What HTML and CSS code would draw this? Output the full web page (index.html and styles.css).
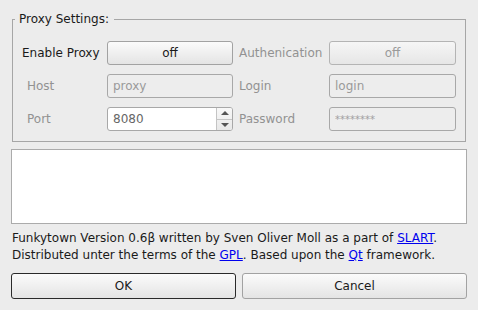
FILE: index.html
```html
<!DOCTYPE html>
<html lang="en">
<head>
    <meta charset="UTF-8">
    <title>Funkytown Settings</title>
    <link rel="stylesheet" href="styles.css">
</head>
<body>
    <div class="dialog">
        <fieldset class="group">
            <legend>Proxy Settings:</legend>
            <div class="form">
                <span class="lbl">Enable Proxy</span>
                <button class="btn">off</button>
                <span class="lbl lbl-right off">Authenication</span>
                <button class="btn" disabled>off</button>

                <span class="lbl lbl-sub off">Host</span>
                <input class="field" type="text" value="proxy" disabled>
                <span class="lbl lbl-right off">Login</span>
                <input class="field" type="text" value="login" disabled>

                <span class="lbl lbl-sub off">Port</span>
                <div class="spin">
                    <input class="spin-input" type="text" value="8080">
                    <div class="spin-arrows">
                        <span class="arrow arrow-up"></span>
                        <span class="arrow arrow-down"></span>
                    </div>
                </div>
                <span class="lbl lbl-right off">Password</span>
                <input class="field field-pass" type="text" value="********" disabled>
            </div>
        </fieldset>

        <div class="log"></div>

        <p class="about">
            Funkytown Version 0.6β written by Sven Oliver Moll as a part of <a href="#">SLART</a>.<br>
            Distributed unter the terms of the <a href="#">GPL</a>. Based upon the <a href="#">Qt</a> framework.
        </p>

        <div class="actions">
            <button class="btn btn-default">OK</button>
            <button class="btn">Cancel</button>
        </div>
    </div>
</body>
</html>
```

FILE: styles.css
```css
body {
    margin: 0;
    background: #ececec;
    font-family: 'DejaVu Sans', sans-serif;
    font-size: 12px;
    color: #1a1a1a;
}
.dialog {
    padding: 12px 11px 0 11px;
}
.group {
    margin: 0 1px 0 1px;
    padding: 0;
    border: 1px solid #a6a6a6;
    min-width: 0;
}
.group legend {
    margin-left: 2px;
    padding: 0 5px 0 4px;
    line-height: 14px;
    color: #1a1a1a;
}
.form {
    display: grid;
    grid-template-columns: 85px 126px 96px 127px;
    grid-auto-rows: 24px;
    row-gap: 9px;
    padding: 15px 0 10px 9px;
}
.lbl {
    display: flex;
    align-items: center;
    white-space: nowrap;
}
.lbl-sub {
    padding-left: 5px;
}
.lbl-right {
    padding-left: 6px;
}
.off {
    color: #929292;
}
.btn {
    font-family: 'DejaVu Sans', sans-serif;
    font-size: 12px;
    color: #1a1a1a;
    background: linear-gradient(#fbfbfb, #e4e4e4);
    border: 1px solid #a2a2a2;
    border-radius: 3px;
    padding: 0;
    height: 24px;
}
.btn:disabled {
    color: #9a9a9a;
    border-color: #b4b4b4;
    background: linear-gradient(#f6f6f6, #e6e6e6);
}
.field {
    font-family: 'DejaVu Sans', sans-serif;
    font-size: 12px;
    border: 1px solid #a8a8a8;
    border-radius: 3px;
    background: #ededed;
    color: #9a9a9a;
    padding: 0 5px;
    height: 24px;
    box-sizing: border-box;
    width: 100%;
    margin: 0;
}
.field-pass {
    font-size: 10px;
    color: #a0a0a0;
}
.spin {
    display: flex;
    border: 1px solid #a8a8a8;
    border-radius: 3px;
    background: #fff;
    height: 24px;
    box-sizing: border-box;
}
.spin-input {
    flex: 1;
    min-width: 0;
    border: none;
    outline: none;
    background: transparent;
    font-family: 'DejaVu Sans', sans-serif;
    font-size: 12px;
    color: #666;
    padding: 0 5px;
}
.spin-arrows {
    width: 15px;
    display: flex;
    flex-direction: column;
    border-left: 1px solid #c4c4c4;
    background: linear-gradient(#f8f8f8, #e8e8e8);
    border-radius: 0 2px 2px 0;
}
.arrow {
    flex: 1;
    display: flex;
    align-items: center;
    justify-content: center;
}
.arrow-up {
    border-bottom: 1px solid #c4c4c4;
}
.arrow-up::after {
    content: '';
    border-left: 4px solid transparent;
    border-right: 4px solid transparent;
    border-bottom: 4px solid #555;
}
.arrow-down::after {
    content: '';
    border-left: 4px solid transparent;
    border-right: 4px solid transparent;
    border-top: 4px solid #555;
}
.log {
    margin-top: 7px;
    height: 73px;
    background: #fff;
    border: 1px solid #ababab;
}
.about {
    margin: 6px 0 0 1px;
    line-height: 17px;
}
.about a {
    color: #0000ee;
}
.actions {
    display: grid;
    grid-template-columns: 1fr 1fr;
    column-gap: 6px;
    margin-top: 9px;
}
.actions .btn {
    height: 26px;
}
.btn-default {
    border-color: #2a2a2a;
}
```
